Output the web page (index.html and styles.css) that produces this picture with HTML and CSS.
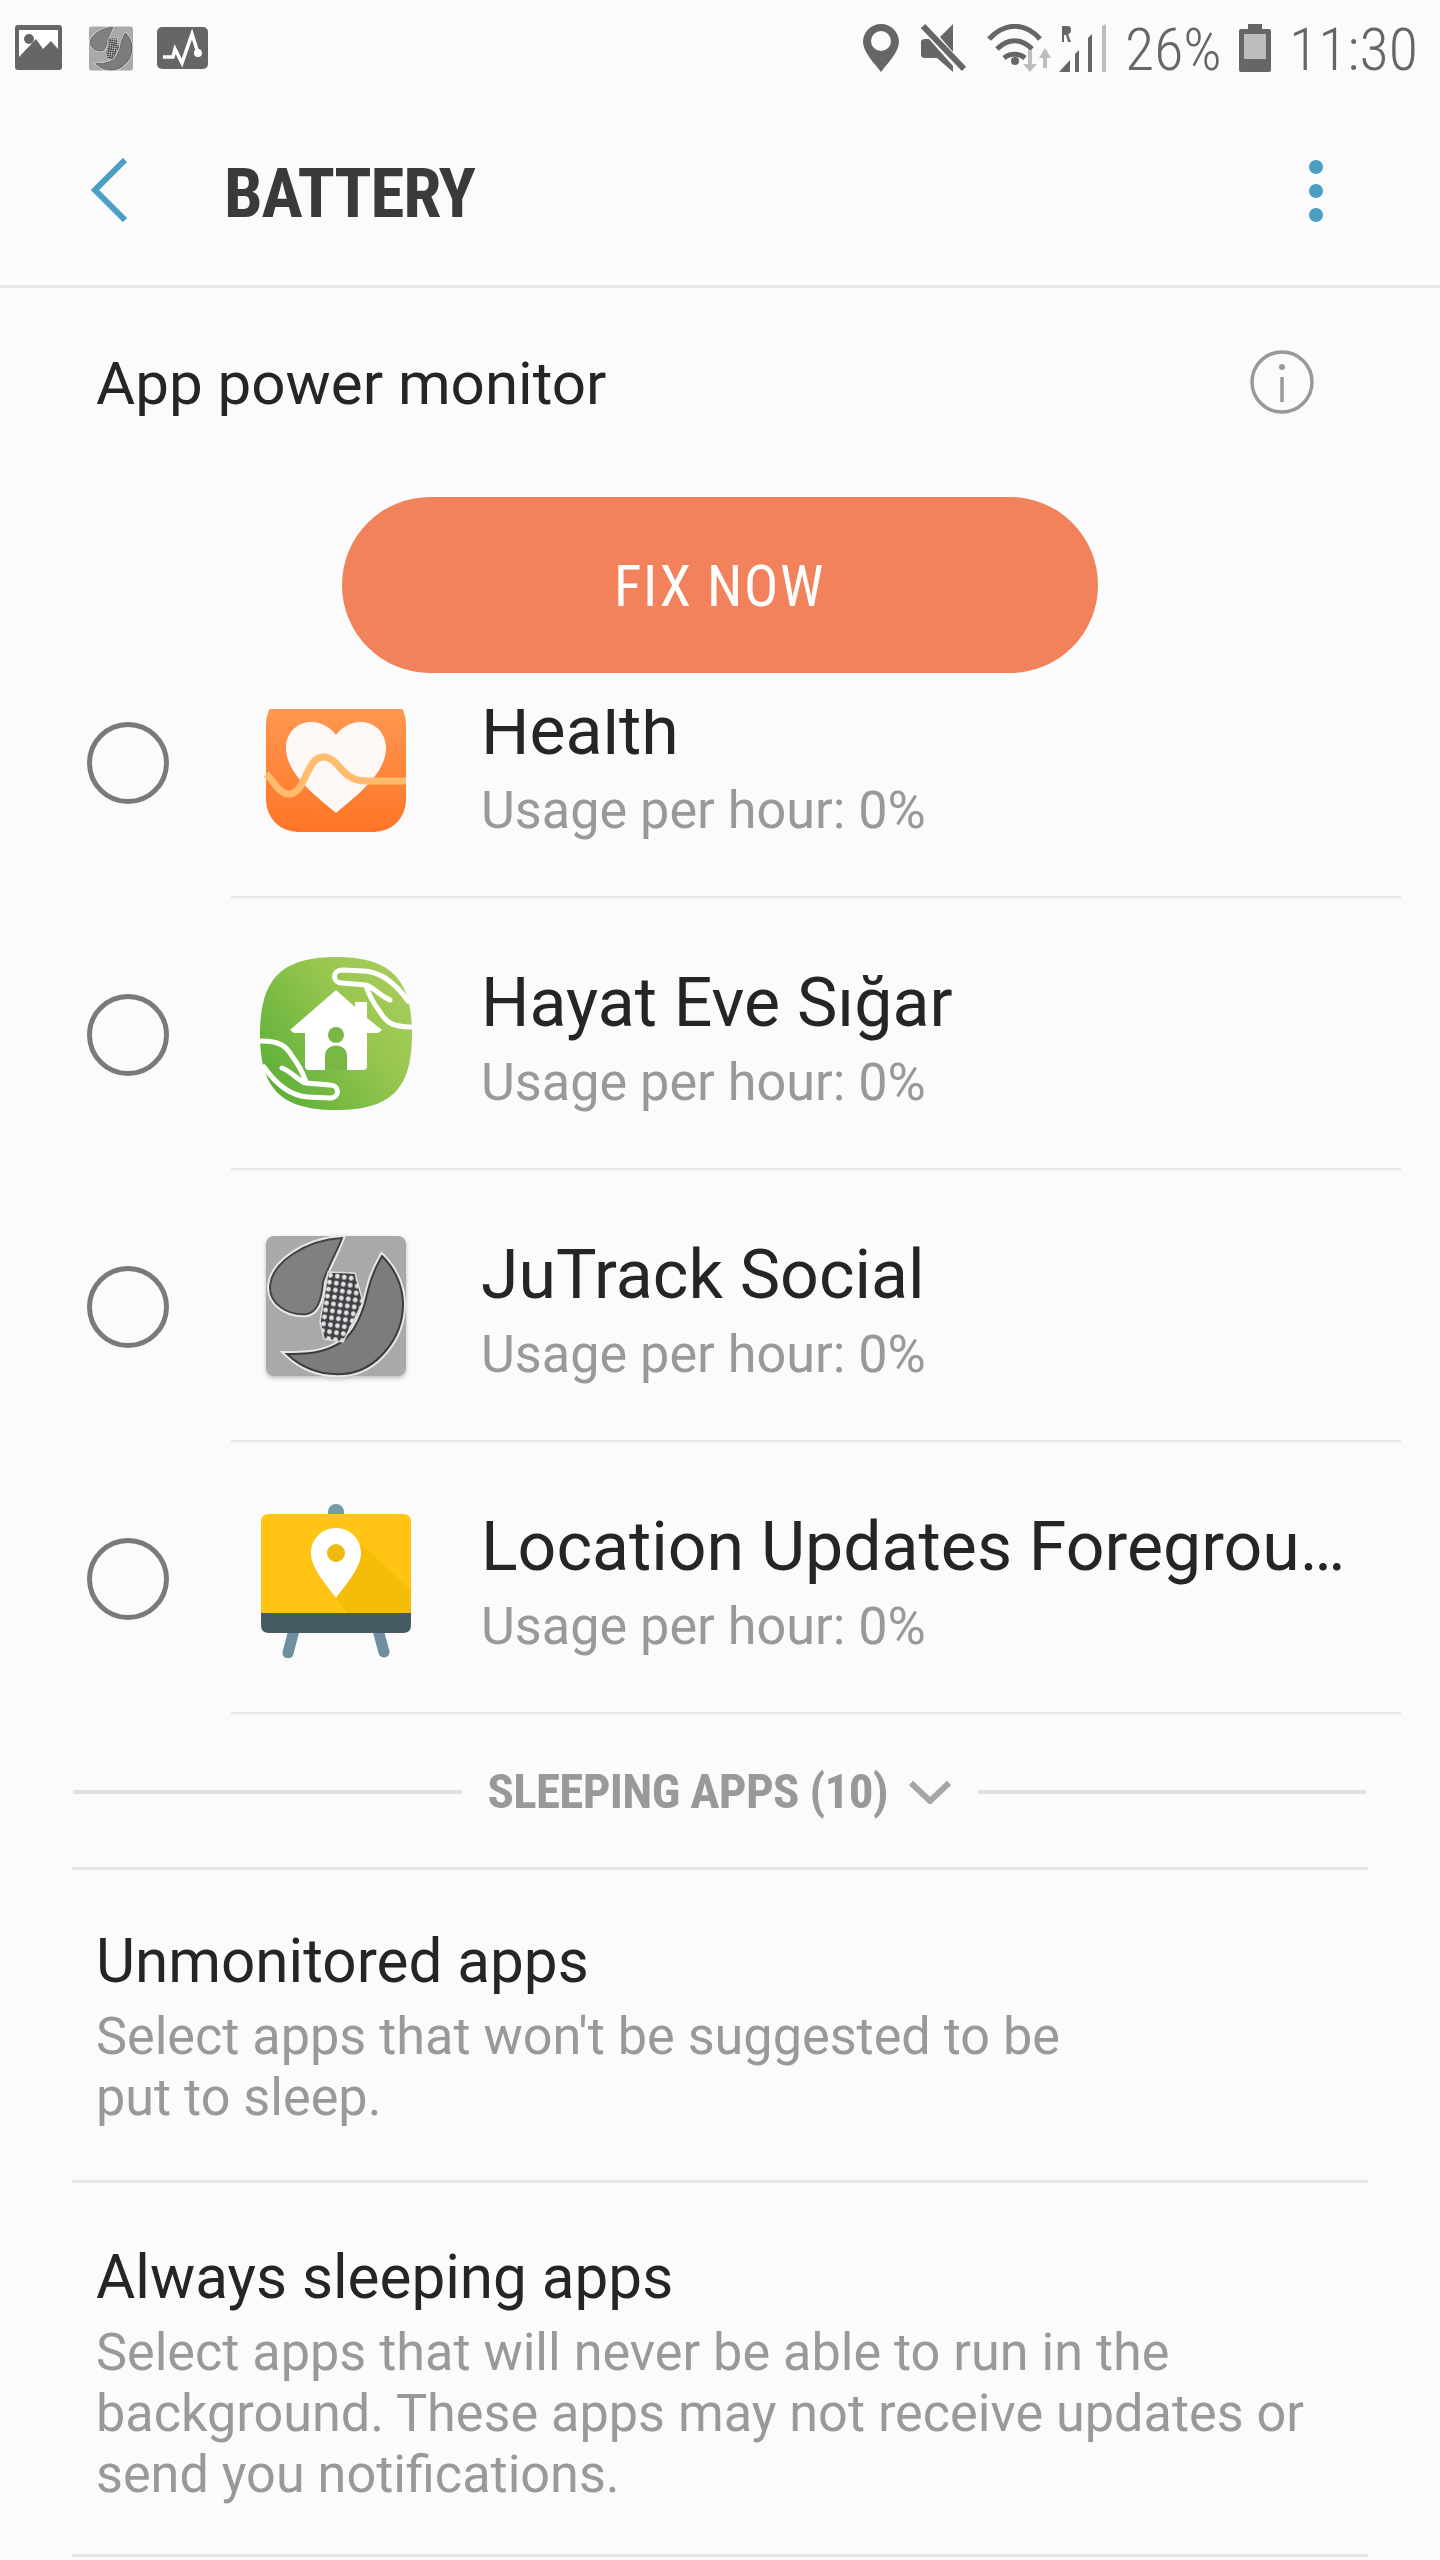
FILE: index.html
```html
<!DOCTYPE html>
<html lang="en">

<head>
    <meta charset="UTF-8">
    <title>Battery</title>
    <link rel="stylesheet" href="styles.css">
</head>

<body>
    <!-- status bar -->
    <div class="status">
        <div class="status-left">
            <svg class="s-img" viewBox="0 0 47 45"><rect width="47" height="45" rx="3" fill="#666"/><path d="M4 5H43V24L36 16L28 24L21 14L4 32Z" fill="#fff"/><circle cx="14" cy="14" r="5" fill="#666"/></svg>
            <svg class="s-ju" viewBox="10 10 140 140"><use href="#jutrack"/></svg>
            <svg class="s-pulse" viewBox="0 0 51 42"><rect width="51" height="42" rx="5" fill="#666"/><path d="M6 30H16L18 22L25 36L35 7L41 26" fill="none" stroke="#fff" stroke-width="3.5"/><circle cx="41" cy="26" r="4" fill="#fff"/></svg>
        </div>
        <div class="status-right">
            <svg class="s-pin" viewBox="0 0 36 48"><path d="M18 0C8 0 0 8 0 18C0 28 12 40 18 48C24 40 36 28 36 18C36 8 28 0 18 0Z" fill="#666"/><circle cx="18" cy="17" r="10" fill="#fbfbfb"/></svg>
            <svg class="s-mute" viewBox="0 0 45 48"><path d="M0 18Q0 15 4 15H8L32 42V48L16 34H4Q0 34 0 31Z M32 0V28L19 13Z" fill="#666"/><path d="M2 2L43 45" stroke="#666" stroke-width="6"/></svg>
            <svg class="s-wifi" viewBox="0 0 64 48"><path d="M2 15C18 -2 38 -2 53 15M10 25C21 14 34 14 45 25M17 34C23 29 32 29 38 34" fill="none" stroke="#666" stroke-width="5"/><circle cx="28" cy="37" r="4" fill="#666"/><path d="M41 26V40H36L43 48L50 40H45V26ZM58 24L52 34H56V44H60V34H64Z" fill="#bdbdbd"/></svg>
            <svg class="s-sig" viewBox="0 0 48 48"><path d="M3 2H9Q12 2 12 6T9 10L12 18H9L7 11H5V18H3Z" fill="#666"/><path d="M0 48L11 36V48ZM16 30L20 26V48H16ZM29 14L33 10V48H29Z" fill="#666"/><path d="M43 2L47 0V48H43Z" fill="#bdbdbd"/></svg>
            <span class="s-text s-pct">26%</span>
            <svg class="s-bat" viewBox="0 0 32 48"><path d="M9 0H23V5H30Q32 5 32 7V46Q32 48 30 48H2Q0 48 0 46V7Q0 5 2 5H9Z" fill="#666"/><rect x="5" y="10" width="22" height="25" fill="#bdbdbd"/></svg>
            <span class="s-text s-time">11:30</span>
        </div>
    </div>

    <!-- header -->
    <div class="header">
        <svg class="back" viewBox="0 0 38 64"><path d="M35 2L5 32L35 62" fill="none" stroke="#4a9fc3" stroke-width="6"/></svg>
        <div class="title">BATTERY</div>
        <div class="more"><i></i><i></i><i></i></div>
    </div>

    <div class="monitor">
        <span>App power monitor</span>
        <svg class="info" viewBox="0 0 64 64"><circle cx="32" cy="32" r="30" fill="none" stroke="#999" stroke-width="3.500"/><circle cx="32" cy="17" r="3" fill="#999"/><path d="M32 27V52" stroke="#999" stroke-width="3.500"/></svg>
    </div>

    <div class="fix"><div class="fix-btn">FIX NOW</div></div>

    <!-- app list, scrolled a bit so first row is cut -->
    <div class="list">
        <div class="list-inner">
            <div class="row">
                <div class="radio"></div>
                <svg class="app" viewBox="0 0 160 160">
                    <defs><linearGradient id="hg" x1="0" y1="0" x2="0" y2="1"><stop offset="0" stop-color="#ff9c56"/><stop offset="1" stop-color="#ff7527"/></linearGradient></defs>
                    <rect x="10" y="10" width="140" height="140" rx="32" fill="url(#hg)"/>
                    <path d="M80 131C60 114 30 92 30 66C30 50 42 40 55 40C66 40 75 46 80 53C85 46 94 40 105 40C118 40 130 50 130 66C130 92 100 114 80 131Z" fill="#fdf8f6"/>
                    <path d="M10 92C18 98 22 112 33 112C50 112 50 75 67 75C84 75 84 99 110 99H150" fill="none" stroke="#ffbc6e" stroke-width="7"/>
                </svg>
                <div class="info-text">
                    <div class="name">Health</div>
                    <div class="usage">Usage per hour: 0%</div>
                </div>
            </div>
            <div class="sep"></div>
            <div class="row">
                <div class="radio"></div>
                <svg class="app" viewBox="0 0 160 160">
                    <defs><linearGradient id="gg" x1="0" y1="1" x2="1" y2="0.300"><stop offset="0" stop-color="#52ab35"/><stop offset="0.700" stop-color="#98c64f"/><stop offset="1" stop-color="#a6cc5a"/></linearGradient></defs>
                    <path d="M80 3C135 3 156 25 156 80C156 135 135 156 80 156C25 156 4 135 4 80C4 25 25 3 80 3Z" fill="url(#gg)"/>
                    <path d="M80 36L99 53V48H111V64L126 76L122 79H111V112Q111 116 107 116H53Q49 116 49 112V79H38L34 76Z" fill="#fff"/>
                    <circle cx="80" cy="81" r="8" fill="#7ab845"/>
                    <path d="M69 116V102C69 88 91 88 91 102V116Z" fill="#7ab845"/>
                    <g id="hand" fill="none" stroke="#fff" stroke-width="5" stroke-linejoin="round" stroke-linecap="round">
                        <path d="M152 47C140 30 125 18 108 17L86 16C76 16 76 29 86 29L110 31C116 32 124 42 134 46"/>
                        <path d="M110 32C114 44 118 50 124 58C130 68 136 73 155 73"/>
                    </g>
                    <use href="#hand" transform="rotate(180 80 80)"/>
                </svg>
                <div class="info-text">
                    <div class="name">Hayat Eve Sığar</div>
                    <div class="usage">Usage per hour: 0%</div>
                </div>
            </div>
            <div class="sep"></div>
            <div class="row">
                <div class="radio"></div>
                <svg class="app app-shadow" viewBox="0 0 160 160">
                    <defs>
                        <pattern id="dots" width="7" height="7" patternUnits="userSpaceOnUse" patternTransform="rotate(8)"><rect width="7" height="7" fill="#3e4044"/><circle cx="3.500" cy="3.500" r="2.400" fill="#e4e4e4"/></pattern>
                    </defs>
                    <g id="jutrack">
                        <rect x="10" y="10" width="140" height="140" rx="8" fill="#a9a9a9"/>
                        <path d="M86 12C50 14 16 36 14 60C13 78 32 90 51 88C62 86 66 70 67 56C72 40 80 28 86 12Z" fill="#808080" stroke="#e8e8e8" stroke-width="6"/>
                        <path d="M86 12C50 14 16 36 14 60C13 78 32 90 51 88C62 86 66 70 67 56C72 40 80 28 86 12Z" fill="#808080" stroke="#444" stroke-width="2"/>
                        <path d="M126 30C114 50 112 66 108 80C100 104 90 116 74 122C60 128 44 128 31 128C50 146 70 149 87 148C120 146 148 112 147 76C146 58 138 42 126 30Z" fill="#7c7c7c" stroke="#e8e8e8" stroke-width="6"/>
                        <path d="M126 30C114 50 112 66 108 80C100 104 90 116 74 122C60 128 44 128 31 128C50 146 70 149 87 148C120 146 148 112 147 76C146 58 138 42 126 30Z" fill="#7c7c7c" stroke="#3c3c3c" stroke-width="2"/>
                        <path d="M72 46L99 47L107 76L87 116L68 113L64 96Z" fill="url(#dots)" stroke="#ddd" stroke-width="1.500"/>
                    </g>
                </svg>
                <div class="info-text">
                    <div class="name">JuTrack Social</div>
                    <div class="usage">Usage per hour: 0%</div>
                </div>
            </div>
            <div class="sep"></div>
            <div class="row">
                <div class="radio"></div>
                <svg class="app" viewBox="0 0 160 160">
                    <path d="M38 132L32 155M122 132L128 154" stroke="#6f8fa0" stroke-width="11" stroke-linecap="round"/>
                    <path d="M72 18V14A8 8 0 0 1 88 14V18Z" fill="#7b98a8"/>
                    <path d="M5 115V24Q5 16 13 16H147Q155 16 155 24V115Z" fill="#ffc414"/>
                    <path d="M104 45L155 92V115H91L80 100Z" fill="#f5bc0a"/>
                    <path d="M5 115H155V127Q155 135 147 135H13Q5 135 5 127Z" fill="#465a64"/>
                    <path d="M80 30C66 30 55 41 55 55C55 70 70 86 80 100C90 86 105 70 105 55C105 41 94 30 80 30Z" fill="#fff"/>
                    <circle cx="80" cy="55" r="9" fill="#f0b90f"/>
                </svg>
                <div class="info-text">
                    <div class="name">Location Updates Foreground Service</div>
                    <div class="usage">Usage per hour: 0%</div>
                </div>
            </div>
            <div class="sep"></div>
        </div>
    </div>

    <div class="sleeping">
        <div class="line line-l"></div>
        <span class="sleep-text">SLEEPING APPS (10)</span>
        <svg class="chev" viewBox="0 0 42 24"><path d="M2 3L21 21L40 3" fill="none" stroke="#a6a6a6" stroke-width="6"/></svg>
        <div class="line line-r"></div>
    </div>

    <div class="setting setting-one">
        <div class="set-title">Unmonitored apps</div>
        <div class="set-sub">Select apps that won't be suggested to be<br>put to sleep.</div>
    </div>
    <div class="setting setting-two">
        <div class="set-title">Always sleeping apps</div>
        <div class="set-sub">Select apps that will never be able to run in the<br>background. These apps may not receive updates or<br>send you notifications.</div>
    </div>
</body>

</html>
```

FILE: styles.css
```css
* {
    margin: 0;
    padding: 0;
    box-sizing: border-box;
}

html, body {
    width: 1440px;
    height: 2560px;
    overflow: hidden;
}

body {
    background-color: #fbfbfb;
    font-family: Roboto, "Noto Sans", sans-serif;
    color: #252525;
}

/* status bar */
.status {
    height: 96px;
    display: flex;
    justify-content: space-between;
    padding: 24px 22px 0 15px;
}

.status-left, .status-right {
    display: flex;
    align-items: flex-start;
}

.s-img { width: 47px; height: 45px; margin-top: 1px; }
.s-ju { width: 44px; height: 45px; margin: 2px 0 0 27px; }
.s-pulse { width: 51px; height: 42px; margin: 3px 0 0 24px; }

.s-pin { width: 36px; height: 48px; }
.s-mute { width: 45px; height: 48px; margin-left: 22px; }
.s-wifi { width: 64px; height: 48px; margin-left: 21px; }
.s-sig { width: 48px; height: 48px; margin-left: 8px; }
.s-bat { width: 32px; height: 48px; margin-left: 18px; }

.s-text {
    font-size: 60px;
    line-height: 48px;
    height: 48px;
    color: #666;
    font-weight: 300;
    font-stretch: 78%;
    margin-top: 2px;
    white-space: nowrap;
}

.s-pct { margin-left: 18px; width: 96px; }
.s-time { margin-left: 18px; width: 129px; }

/* header */
.header {
    height: 192px;
    border-bottom: 3px solid #e8e8e8;
    display: flex;
    align-items: center;
    padding: 0 0 0 90px;
}

.back { width: 38px; height: 64px; margin-top: -1px; }

.title {
    margin-left: 96px;
    flex: 1;
    font-size: 69px;
    font-weight: 700;
    font-stretch: 75%;
    letter-spacing: -1.200px;
    color: #3a3a3a;
    line-height: 72px;
    margin-top: 6px;
}

.more {
    width: 15px;
    margin-right: 116px;
    display: flex;
    flex-direction: column;
    gap: 10px;
    margin-top: 1px;
}

.more i {
    display: block;
    width: 14px;
    height: 14px;
    border-radius: 50%;
    background-color: #4a9fc3;
}

.monitor {
    height: 190px;
    display: flex;
    align-items: center;
    justify-content: space-between;
    padding: 0 126px 0 96px;
    font-size: 60.100px;
}

.info { width: 64px; height: 64px; margin-top: -3px; }

.fix {
    margin-top: 19px;
    display: flex;
    justify-content: center;
}

.fix-btn {
    width: 756px;
    height: 176px;
    margin-left: -1px;
    border-radius: 88px;
    background-color: #f1825c;
    color: #fff;
    font-size: 57px;
    font-stretch: 75%;
    letter-spacing: 1.600px;
    padding-top: 2px;
    display: flex;
    align-items: center;
    justify-content: center;
}

/* list */
.list {
    margin-top: 36px;
    height: 1007px;
    overflow: hidden;
}

.list-inner {
    margin-top: -83px;
}

.row {
    height: 270px;
    display: flex;
    align-items: center;
    padding-left: 87px;
}

.radio {
    width: 82px;
    height: 82px;
    border: 5px solid #7a7a7a;
    border-radius: 50%;
    margin-top: 3px;
    flex-shrink: 0;
}

.app {
    width: 160px;
    height: 160px;
    margin-left: 87px;
    flex-shrink: 0;
    margin-top: 2px;
}

.app-shadow {
    filter: drop-shadow(0 2px 2px rgba(0, 0, 0, 0.25));
}

.info-text {
    margin-left: 65px;
    width: 866px;
    padding-top: 9px;
}

.name {
    font-size: 68px;
    line-height: 80px;
    white-space: nowrap;
    overflow: hidden;
    text-overflow: ellipsis;
}

.usage {
    font-size: 52.200px;
    line-height: 60px;
    color: #999;
    margin-top: 10px;
}

.sep {
    height: 2px;
    margin-left: 231px;
    width: 1170px;
    background-color: #e6e6e6;
}

/* sleeping apps */
.sleeping {
    height: 151px;
    margin-left: 73px;
    width: 1293px;
    display: flex;
    align-items: center;
}

.line {
    height: 4px;
    background-color: #e0e0e0;
    flex: 1;
}

.sleep-text {
    width: 399px;
    margin-left: 26px;
    font-size: 49px;
    font-weight: 700;
    font-stretch: 75%;
    letter-spacing: -0.700px;
    color: #999;
    white-space: nowrap;
}

.chev {
    width: 42px;
    height: 24px;
    margin: 0 27px 0 22px;
}

.setting {
    margin: 0 72px;
    border-top: 3px solid #e6e6e6;
    padding-left: 24px;
}

.setting-one { height: 313px; padding-top: 56px; }
.setting-two { height: 377px; padding-top: 59px; border-bottom: 3px solid #e6e6e6; }

.set-title {
    font-size: 60.200px;
    line-height: 72px;
}

.set-sub {
    font-size: 52.200px;
    line-height: 61px;
    color: #999;
    margin-top: 8px;
}
```
